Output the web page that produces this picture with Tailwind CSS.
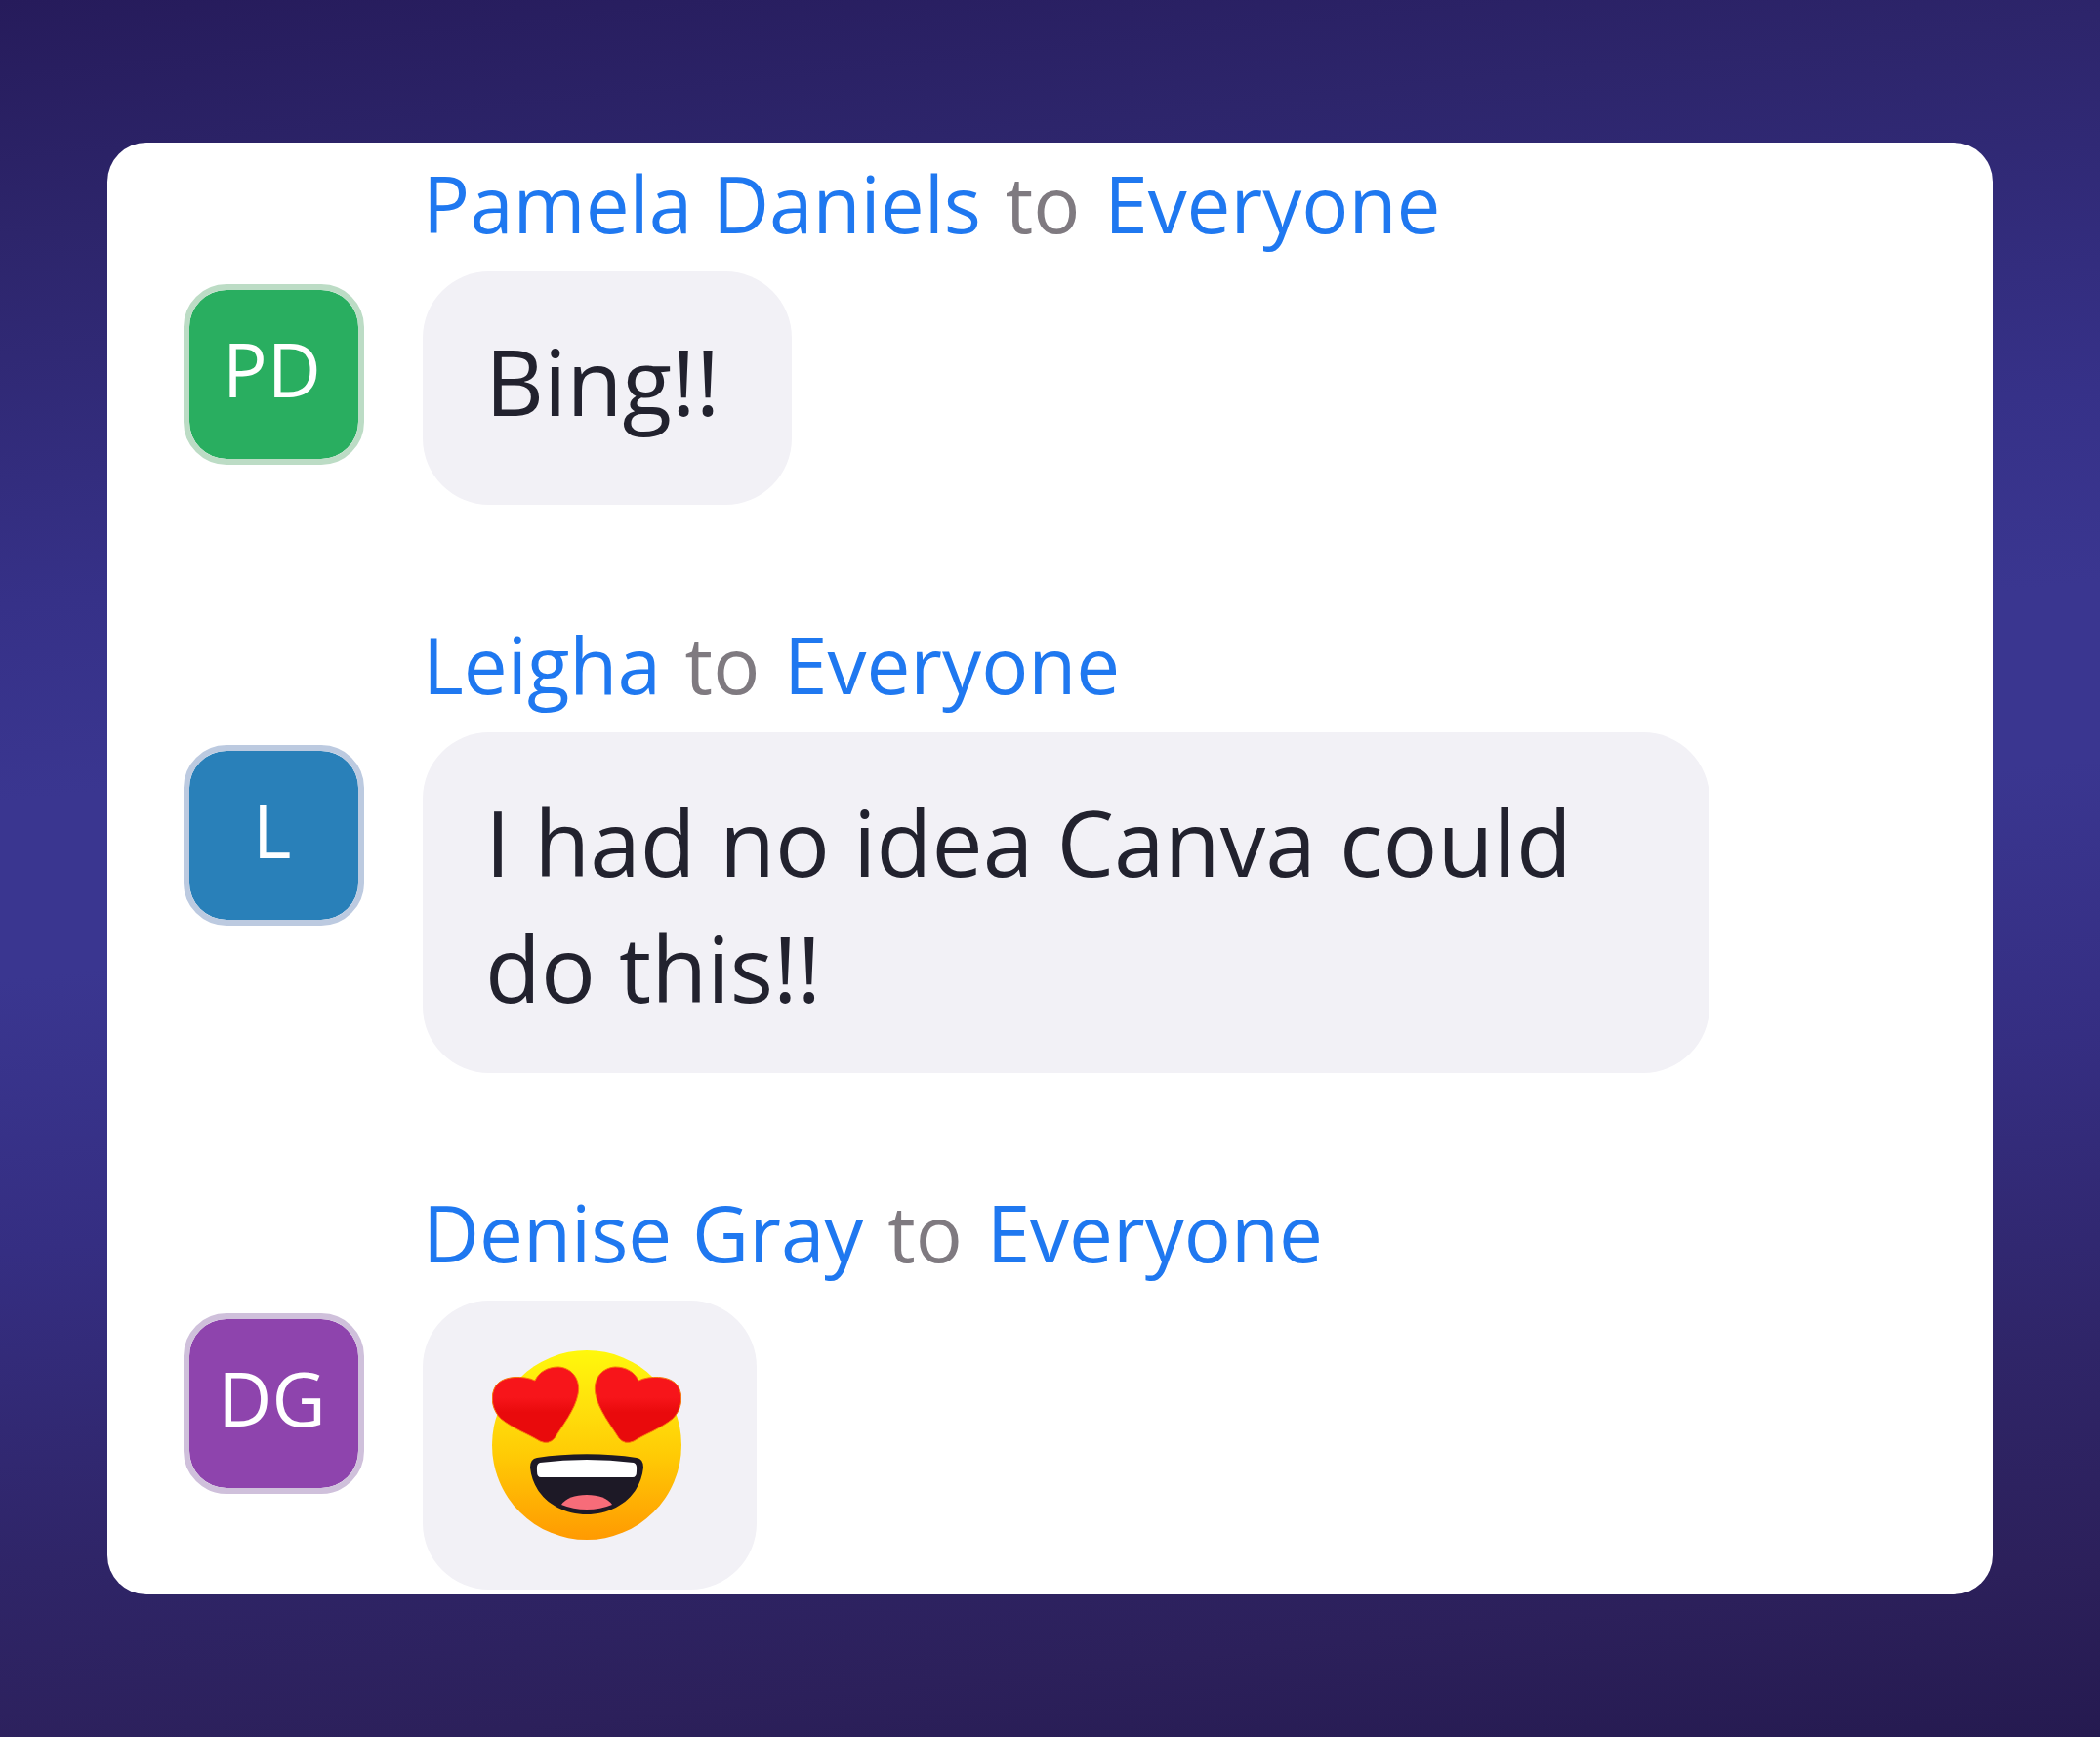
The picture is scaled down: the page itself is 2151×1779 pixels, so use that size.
<!DOCTYPE html>
<html lang="en">
<head>
  <meta charset="UTF-8" />
  <meta name="viewport" content="width=device-width, initial-scale=1.0"/>
  <title>Meeting Chat</title>
  <script src="https://cdn.jsdelivr.net/npm/@tailwindcss/browser@4"></script>
</head>
<body class="min-h-screen flex flex-col bg-[linear-gradient(174deg,#261b5b_0%,#2d256b_12%,#363188_31%,#3a3690_41%,#3a3690_50%,#352e82_64%,#2f2568_80%,#2c205b_91%,#251a50_100%)] px-[110px] py-[146px] font-['Open_Sans',sans-serif]">

  <main class="flex-1 bg-white rounded-[40px] pl-[78px] pr-20 pt-[14px] pb-[5px] flex flex-col gap-[115px]">

    <!-- Pamela Daniels -->
    <article class="flex items-start gap-[60px]">
      <div class="mt-[131px] size-[185px] shrink-0 rounded-[44px] border-6 border-[#bcdcc5] bg-[#29ae60] bg-clip-padding pb-3 pr-1 flex items-center justify-center text-[76px] leading-[96px] text-white">PD</div>
      <div>
        <h2 class="text-[80px] leading-[96px] text-[#7f7a80] whitespace-nowrap"><span class="text-[#1f78f0]">Pamela Daniels</span> <span class="mx-1">to</span> <span class="text-[#1f78f0]">Everyone</span></h2>
        <p class="mt-[22px] w-fit min-h-[239px] rounded-[68px] bg-[#f2f1f6] pl-16 pr-[74px] pt-12 pb-[43px] text-[93px] leading-[129px] text-[#22222e]">Bing!!</p>
      </div>
    </article>

    <!-- Leigha -->
    <article class="flex items-start gap-[60px]">
      <div class="mt-[131px] size-[185px] shrink-0 rounded-[44px] border-6 border-[#bccae0] bg-[#2980b9] bg-clip-padding pb-3 pr-1 flex items-center justify-center text-[76px] leading-[96px] text-white">L</div>
      <div>
        <h2 class="text-[80px] leading-[96px] text-[#7f7a80] whitespace-nowrap"><span class="text-[#1f78f0]">Leigha</span> <span class="mx-1">to</span> <span class="text-[#1f78f0]">Everyone</span></h2>
        <p class="mt-[22px] max-w-[1318px] min-h-[239px] rounded-[68px] bg-[#f2f1f6] pl-16 pr-[74px] pt-12 pb-[43px] text-[93px] leading-[129px] text-[#22222e]">I had no idea Canva could do this!!</p>
      </div>
    </article>

    <!-- Denise Gray -->
    <article class="flex items-start gap-[60px]">
      <div class="mt-[131px] size-[185px] shrink-0 rounded-[44px] border-6 border-[#cfc0db] bg-[#8e44ad] bg-clip-padding pb-3 pr-1 flex items-center justify-center text-[76px] leading-[96px] text-white">DG</div>
      <div>
        <h2 class="text-[80px] leading-[96px] text-[#7f7a80] whitespace-nowrap"><span class="text-[#1f78f0]">Denise Gray</span> <span class="mx-1">to</span> <span class="text-[#1f78f0]">Everyone</span></h2>
        <div class="mt-[22px] w-fit rounded-[68px] bg-[#f2f1f6] pl-[71px] pr-[77px] py-[51px]">
          <svg class="block size-[194px]" viewBox="0 0 194 194" role="img" aria-label="Smiling face with heart eyes">
            <defs>
              <linearGradient id="face" x1="0" y1="0" x2="0" y2="1">
                <stop offset="0" stop-color="#fff80c"/>
                <stop offset=".3" stop-color="#ffe00c"/>
                <stop offset=".55" stop-color="#ffcb05"/>
                <stop offset="1" stop-color="#ff9a02"/>
              </linearGradient>
              <linearGradient id="heart" x1="0" y1="0" x2="0" y2="1">
                <stop offset=".4" stop-color="#f7151a"/>
                <stop offset=".6" stop-color="#e90a0c"/>
              </linearGradient>
            </defs>
            <circle cx="97" cy="97" r="97" fill="url(#face)"/>
            <!-- eyes -->
            <path d="M49 93C38 86 21 80 9 70C1 62-2 50 2 40C6 29 20 26 34 28Q40 29 44 31C48 22 57 17 68 17C83 18 91 31 88 45C85 61 72 77 64 90Q58 97 49 93Z" fill="url(#heart)" stroke="#f8780a" stroke-width="1"/>
            <path d="M145 93C156 86 173 80 185 70C193 62 196 50 192 40C188 29 174 26 160 28Q154 29 150 31C146 22 137 17 126 17C111 18 103 31 106 45C109 61 122 77 130 90Q136 97 145 93Z" fill="url(#heart)" stroke="#f8780a" stroke-width="1"/>
            <!-- mouth -->
            <path d="M46 110C78 105 116 105 148 110Q155 111 155 120C152 150 126 168 97 168C68 168 42 150 39 120Q39 111 46 110Z" fill="#1d1926"/>
            <path d="M49 115Q97 109 145 115Q149 116 148 124Q148 130 144 130H50Q46 130 46 124Q45 116 49 115Z" fill="#fff"/>
            <path d="M71 158Q78 148 97 148Q116 148 123 158Q111 163 97 163Q83 163 71 158Z" fill="#f76c79"/>
          </svg>
        </div>
      </div>
    </article>

  </main>

</body>
</html>
